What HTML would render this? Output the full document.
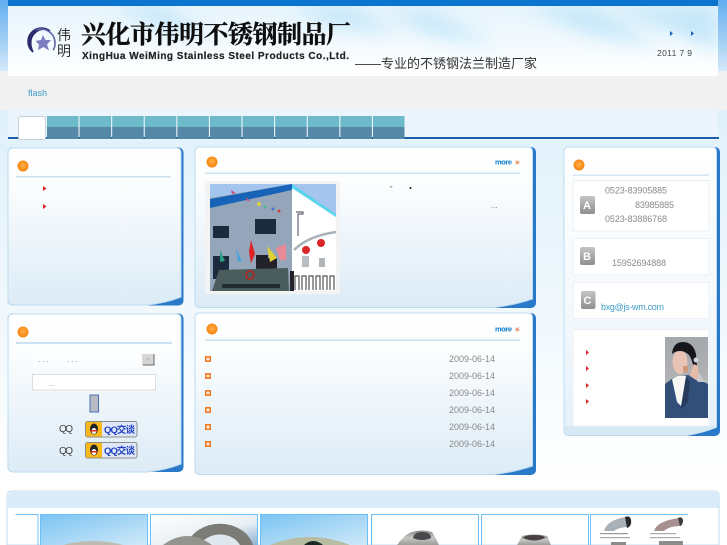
<!DOCTYPE html>
<html lang="zh"><head><meta charset="utf-8"><title>兴化市伟明不锈钢制品厂</title>
<style>
html,body{margin:0;padding:0;width:727px;height:545px;overflow:hidden;background:#fff}
svg{display:block}
text{font-family:"Liberation Sans","Noto Sans CJK SC",sans-serif}
.d{font-size:9px;fill:#8a8a8a}
</style></head><body>
<svg width="727" height="545" viewBox="0 0 727 545" xmlns="http://www.w3.org/2000/svg">
<defs>
<linearGradient id="bg" x1="0" y1="0" x2="0" y2="1"><stop offset="0" stop-color="#dff0fa"/><stop offset=".45" stop-color="#eef7fc"/><stop offset="1" stop-color="#fff"/></linearGradient>
<linearGradient id="side" x1="0" y1="0" x2="0" y2="1"><stop offset="0" stop-color="#62aeef"/><stop offset="1" stop-color="#d5e9f9"/></linearGradient>
<linearGradient id="hd" x1="0" y1="0" x2="0" y2="1"><stop offset="0" stop-color="#e6f4fc"/><stop offset=".6" stop-color="#f5fbfe"/><stop offset="1" stop-color="#fff"/></linearGradient>
<linearGradient id="pn" x1="0" y1="0" x2="0" y2="1"><stop offset="0" stop-color="#fff"/><stop offset=".25" stop-color="#fbfdfe"/><stop offset="1" stop-color="#dcebf6"/></linearGradient>
<linearGradient id="rp" x1="0" y1="0" x2="0" y2="1"><stop offset="0" stop-color="#fff"/><stop offset=".5" stop-color="#f6fafd"/><stop offset="1" stop-color="#e4f0f9"/></linearGradient>
<linearGradient id="gb" x1="0" y1="0" x2="0" y2="1"><stop offset="0" stop-color="#c4c4c4"/><stop offset="1" stop-color="#8f8f8f"/></linearGradient>
<radialGradient id="or" cx=".5" cy=".45" r=".6"><stop offset="0" stop-color="#ffb04a"/><stop offset="1" stop-color="#f57d05"/></radialGradient>
<linearGradient id="b1" x1="0" y1="0" x2="1" y2="1"><stop offset="0" stop-color="#7cc4f3"/><stop offset="1" stop-color="#cfe9f8"/></linearGradient>
<linearGradient id="b2" x1="0" y1="0" x2="1" y2="1"><stop offset="0" stop-color="#fff"/><stop offset=".6" stop-color="#e8eff4"/><stop offset="1" stop-color="#8fb3d3"/></linearGradient>
<linearGradient id="st" x1="0" y1="0" x2="0" y2="1"><stop offset="0" stop-color="#8a8a88"/><stop offset=".5" stop-color="#c6c6c4"/><stop offset="1" stop-color="#9c9c98"/></linearGradient>
<linearGradient id="pbg" x1="0" y1="0" x2="0" y2="1"><stop offset="0" stop-color="#a4a7ac"/><stop offset="1" stop-color="#bcbcbc"/></linearGradient>
<filter id="bl" x="-30%" y="-60%" width="160%" height="220%"><feGaussianBlur stdDeviation="9"/></filter>
<filter id="s" filterUnits="userSpaceOnUse" x="0" y="0" width="727" height="545"><feGaussianBlur stdDeviation=".35"/></filter>
<clipPath id="hc"><rect x="8" y="6" width="710" height="70"/></clipPath>
<clipPath id="ph"><rect x="665" y="337" width="43" height="81"/></clipPath>
</defs>

<rect width="727" height="545" fill="#fff"/>
<rect y="110" width="727" height="380" fill="url(#bg)"/>
<rect width="8" height="72" fill="url(#side)"/>
<rect x="718" width="9" height="72" fill="url(#side)"/>
<rect y="71" width="727" height="39" fill="#f1f1f1"/>

<!-- header -->
<rect x="8" y="6" width="710" height="70" fill="url(#hd)"/>
<g clip-path="url(#hc)"><g filter="url(#bl)" fill="#c4e7f9">
<polygon points="112,6 160,6 215,40 165,30"/>
<polygon points="290,6 350,6 400,34 330,26"/>
<polygon points="385,12 430,12 500,46 430,34"/>
<polygon points="525,6 590,6 660,46 590,34"/>
<polygon points="610,6 718,6 718,50 680,34"/>
</g></g>
<rect x="8" y="0" width="710" height="6" fill="#0a74cf"/>
<rect x="8" y="76" width="710" height="34" fill="#f1f1f1"/>

<g filter="url(#s)">
<!-- logo -->
<path d="M50 31a13.500 13.500 0 0 0-17 21q-3-6-2-12t8-10q6-2 11 1z" fill="#2c2a6c" stroke="#2c2a6c" stroke-width="1.500"/>
<path d="M36 30a14 14 0 0 1 19 13q0 5-2 7" fill="none" stroke="#5b62a4" stroke-width="1.600"/>
<polygon points="43,35 45.500,40 51,40 47,44.500 49,50.500 43.500,47 38,50 39,44.500 35.500,41 41,40" fill="#7c7cc0"/>
<text x="57" y="40" font-size="14" fill="#333">伟</text>
<text x="57" y="56" font-size="14" fill="#333">明</text>
<text x="81" y="43" font-size="25" font-weight="700" fill="#111" stroke="#111" stroke-width=".35" textLength="270" style="font-family:'Noto Serif CJK SC','Liberation Serif',serif">兴化市伟明不锈钢制品厂</text>
<text x="82" y="59" font-size="10" font-weight="700" fill="#222" stroke="#222" stroke-width=".2" textLength="267" lengthAdjust="spacing">XingHua WeiMing Stainless Steel Products Co.,Ltd.</text>
<text x="355" y="68" font-size="13" fill="#333" textLength="182">——专业的不锈钢法兰制造厂家</text>
<polygon points="670,31 673,33.500 670,36" fill="#1a62c0"/>
<polygon points="691,31 694,33.500 691,36" fill="#1a62c0"/>
<text x="657" y="56" font-size="8.500" fill="#444" textLength="35">2011 7 9</text>
<text x="28" y="96" font-size="9" fill="#3f9bc8">flash</text>

<!-- nav -->
<rect x="8" y="110" width="710" height="30" fill="#ecf5fb"/>
<rect x="8" y="137" width="711" height="2" fill="#1c5fa8"/>
<rect x="47" y="116" width="31.500" height="11" fill="#6dbbca"/><rect x="47" y="127" width="31.500" height="12" fill="#5488a6"/>
<rect x="79.600" y="116" width="31.500" height="11" fill="#6dbbca"/><rect x="79.600" y="127" width="31.500" height="12" fill="#5488a6"/>
<rect x="112.200" y="116" width="31.500" height="11" fill="#6dbbca"/><rect x="112.200" y="127" width="31.500" height="12" fill="#5488a6"/>
<rect x="144.800" y="116" width="31.500" height="11" fill="#6dbbca"/><rect x="144.800" y="127" width="31.500" height="12" fill="#5488a6"/>
<rect x="177.400" y="116" width="31.500" height="11" fill="#6dbbca"/><rect x="177.400" y="127" width="31.500" height="12" fill="#5488a6"/>
<rect x="210" y="116" width="31.500" height="11" fill="#6dbbca"/><rect x="210" y="127" width="31.500" height="12" fill="#5488a6"/>
<rect x="242.600" y="116" width="31.500" height="11" fill="#6dbbca"/><rect x="242.600" y="127" width="31.500" height="12" fill="#5488a6"/>
<rect x="275.200" y="116" width="31.500" height="11" fill="#6dbbca"/><rect x="275.200" y="127" width="31.500" height="12" fill="#5488a6"/>
<rect x="307.800" y="116" width="31.500" height="11" fill="#6dbbca"/><rect x="307.800" y="127" width="31.500" height="12" fill="#5488a6"/>
<rect x="340.400" y="116" width="31.500" height="11" fill="#6dbbca"/><rect x="340.400" y="127" width="31.500" height="12" fill="#5488a6"/>
<rect x="373" y="116" width="31.500" height="11" fill="#6dbbca"/><rect x="373" y="127" width="31.500" height="12" fill="#5488a6"/>
<rect x="18.500" y="116.500" width="27" height="23" rx="2" fill="#fff" stroke="#c5d3de"/>

<!-- left panel 1 -->
<rect x="7.500" y="147.500" width="176" height="158" rx="5" fill="#2a78c8"/>
<path d="M13 148H176q5 0 5 5V297q-15 6-34 8H13q-5 0-5-5V153q0-5 5-5z" fill="url(#pn)" stroke="#bcdcf2"/>
<rect x="16" y="176" width="155" height="1.500" fill="#cce2f3"/>
<circle cx="23" cy="166" r="5.500" fill="url(#or)"/>
<polygon points="43,186 46.500,188.500 43,191" fill="#e8202a"/>
<polygon points="43,204 46.500,206.500 43,209" fill="#e8202a"/>

<!-- left panel 2 -->
<rect x="7.500" y="313.500" width="176" height="158.500" rx="5" fill="#2a78c8"/>
<path d="M13 314H176q5 0 5 5V464q-15 6-34 8H13q-5 0-5-5V319q0-5 5-5z" fill="url(#pn)" stroke="#bcdcf2"/>
<rect x="16" y="342" width="156" height="2" fill="#cce2f3"/>
<circle cx="23" cy="332" r="5.500" fill="url(#or)"/>
<rect x="33" y="352" width="122" height="15" fill="#fbfdfe"/>
<text x="38" y="362" font-size="9" fill="#999" letter-spacing="1.500">...</text>
<text x="67" y="362" font-size="9" fill="#999" letter-spacing="1.500">...</text>
<rect x="142" y="354" width="12" height="11" fill="#d6d6d6" stroke="#eee" stroke-width=".5"/>
<path d="M143 365H154V354" fill="none" stroke="#666"/>
<polygon points="146,358 150,358 148,361" fill="#bbb"/>
<rect x="32.500" y="374.500" width="123" height="15.500" fill="#fff" stroke="#ddd"/>
<text x="48" y="386" font-size="8" fill="#aaa">...</text>
<rect x="90" y="395" width="8.500" height="17" fill="#b9bbc4" stroke="#4a6fb5"/>
<text x="59" y="432" font-size="10" fill="#444" textLength="14">QQ</text>
<text x="59" y="454" font-size="10" fill="#444" textLength="14">QQ</text>
<rect x="85.500" y="421.500" width="51.500" height="15.500" rx="2" fill="#dfe7f8" stroke="#8b8f86"/>
<rect x="86" y="422" width="16" height="14.500" fill="#f9b91f"/>
<ellipse cx="94" cy="429" rx="4" ry="5.500" fill="#222"/><ellipse cx="94" cy="431" rx="2.500" ry="3" fill="#fff"/><rect x="90.500" y="430" width="7" height="1.500" fill="#d92b20"/>
<text x="104" y="433" font-size="9.500" font-weight="700" fill="#1e3fc0" textLength="31">QQ交谈</text>
<rect x="85.500" y="442.500" width="51.500" height="15.500" rx="2" fill="#dfe7f8" stroke="#8b8f86"/>
<rect x="86" y="443" width="16" height="14.500" fill="#f9b91f"/>
<ellipse cx="94" cy="450" rx="4" ry="5.500" fill="#222"/><ellipse cx="94" cy="452" rx="2.500" ry="3" fill="#fff"/><rect x="90.500" y="451" width="7" height="1.500" fill="#d92b20"/>
<text x="104" y="454" font-size="9.500" font-weight="700" fill="#1e3fc0" textLength="31">QQ交谈</text>

<!-- middle panel 1 -->
<rect x="195" y="147" width="341" height="161" rx="5" fill="#2a78c8"/>
<path d="M200 147H528q4.500 0 4.500 5V299q-18 6-38 8.500H200q-5 0-5-5V152q0-5 5-5z" fill="url(#pn)" stroke="#bcdcf2"/>
<rect x="205" y="172.500" width="315" height="1.500" fill="#cce2f3"/>
<circle cx="212" cy="162" r="5.500" fill="url(#or)"/>
<text x="495" y="164.500" font-size="7.500" font-weight="700" fill="#0a7ad0" textLength="17">more</text>
<rect x="515" y="160" width="5" height="5" fill="#f4e6dc"/><polygon points="516.500,161 519,162.500 516.500,164" fill="#ee5a20"/>
<text x="390" y="191" font-size="7" fill="#555">"</text>
<circle cx="410.500" cy="188" r="1" fill="#111"/>
<text x="491" y="208" font-size="8" fill="#777">...</text>

<!-- building photo -->
<rect x="205" y="181" width="135" height="113" fill="#f3f3f3"/>
<rect x="210" y="184" width="126" height="107" fill="#95a6ba"/>
<polygon points="210,184 292,184 210,198" fill="#a4c6ee"/>
<polygon points="292,184 336,184 336,214" fill="#a4c6ee"/>
<polygon points="292,188 336,217 336,291 292,291" fill="#fff"/>
<polygon points="292,184 336,214 336,217 292,188" fill="#59d6f0"/>
<polygon points="210,199 292,184 292,190 210,208" fill="#1864b8"/>
<rect x="213" y="226" width="16" height="12" fill="#1c2a3c"/>
<rect x="255" y="219" width="21" height="15" fill="#1c2a3c"/>
<rect x="213" y="256" width="16" height="23" fill="#1c2a3c"/>
<rect x="256" y="255" width="12" height="15" fill="#20242c"/>
<rect x="268" y="258" width="9" height="12" fill="#20242c"/>
<polygon points="220,250 225,261 220,262" fill="#2a9c84"/>
<polygon points="236,248 242,261 238,262" fill="#4aa6d8"/>
<polygon points="251,240 255,254 251,263 249,252" fill="#e02028"/>
<polygon points="267,246 277,258 270,262" fill="#e0d030"/>
<polygon points="276,248 286,244 286,260 280,260" fill="#e88a98"/>
<polygon points="219,270 288,268 289,291 212,291" fill="#4c5c5c"/>
<circle cx="250" cy="275" r="4" fill="none" stroke="#c02020" stroke-width="1.500"/>
<rect x="222" y="284" width="58" height="4" fill="#222c30"/>
<rect x="290" y="271" width="4" height="20" fill="#20242c"/>
<path d="M295 290v-14h4v14M302 290v-14h4v14M309 290v-14h4v14M316 290v-14h4v14M323 290v-14h4v14M330 290v-14h4v14" fill="none" stroke="#555" stroke-width="1.200"/>
<path d="M294 250q14-14 42-18" fill="none" stroke="#aab2b8" stroke-width="2.500"/>
<circle cx="306" cy="250" r="4" fill="#d82828"/>
<circle cx="321" cy="243" r="4" fill="#d82828"/>
<rect x="302" y="256" width="7" height="11" fill="#b8bec2"/>
<rect x="319" y="258" width="6" height="9" fill="#b0b6ba"/>
<path d="M296 212h7v2h-5v22" fill="none" stroke="#667" stroke-width="1.200"/>
<polygon points="231,190 236,193 232,194" fill="#d0507a"/><polygon points="246,197 250,201 247,201" fill="#d0507a"/>
<circle cx="259" cy="204" r="2" fill="#d8d040"/><circle cx="265" cy="207" r="1.500" fill="#4cb898"/><circle cx="273" cy="209" r="1.500" fill="#5070d0"/><circle cx="279" cy="211" r="1.500" fill="#d04040"/>

<!-- middle panel 2 -->
<rect x="195" y="313" width="341" height="162" rx="5" fill="#2a78c8"/>
<path d="M200 313H528q4.500 0 4.500 5V466q-18 6-38 8.500H200q-5 0-5-5V318q0-5 5-5z" fill="url(#pn)" stroke="#bcdcf2"/>
<rect x="205" y="339.500" width="315" height="1.500" fill="#cce2f3"/>
<circle cx="212" cy="329" r="5.500" fill="url(#or)"/>
<text x="495" y="331.500" font-size="7.500" font-weight="700" fill="#0a7ad0" textLength="17">more</text>
<rect x="515" y="327" width="5" height="5" fill="#f4e6dc"/><polygon points="516.500,328 519,329.500 516.500,331" fill="#ee5a20"/>
<g fill="#f07a28">
<rect x="205" y="356" width="6" height="6"/><rect x="205" y="373" width="6" height="6"/><rect x="205" y="390" width="6" height="6"/><rect x="205" y="407" width="6" height="6"/><rect x="205" y="424" width="6" height="6"/><rect x="205" y="441" width="6" height="6"/>
</g>
<g fill="#fff">
<rect x="206" y="358.500" width="4" height="1"/><rect x="207.500" y="357" width="1" height="4"/>
<rect x="206" y="375.500" width="4" height="1"/><rect x="207.500" y="374" width="1" height="4"/>
<rect x="206" y="392.500" width="4" height="1"/><rect x="207.500" y="391" width="1" height="4"/>
<rect x="206" y="409.500" width="4" height="1"/><rect x="207.500" y="408" width="1" height="4"/>
<rect x="206" y="426.500" width="4" height="1"/><rect x="207.500" y="425" width="1" height="4"/>
<rect x="206" y="443.500" width="4" height="1"/><rect x="207.500" y="442" width="1" height="4"/>
</g>
<text class="d" x="449" y="362" textLength="46">2009-06-14</text>
<text class="d" x="449" y="379" textLength="46">2009-06-14</text>
<text class="d" x="449" y="396" textLength="46">2009-06-14</text>
<text class="d" x="449" y="413" textLength="46">2009-06-14</text>
<text class="d" x="449" y="430" textLength="46">2009-06-14</text>
<text class="d" x="449" y="447" textLength="46">2009-06-14</text>

<!-- right panel -->
<rect x="564" y="147" width="156" height="289" rx="5" fill="#2a78c8"/>
<path d="M569 147H712q4.500 0 4.500 5V427q-14 6-30 8.500H569q-5 0-5-5V152q0-5 5-5z" fill="url(#rp)" stroke="#bcdcf2"/>
<path d="M565 426H716V428q-14 5-30 7H569q-4 0-4-4z" fill="#d8e9f6"/>
<rect x="573" y="174.500" width="136" height="1.500" fill="#d5e6f4"/>
<circle cx="579" cy="165" r="5.500" fill="url(#or)"/>
<rect x="573" y="180.500" width="136" height="50.500" fill="#fff" stroke="#ebf0f6"/>
<rect x="573" y="238.500" width="136" height="36.500" fill="#fff" stroke="#ebf0f6"/>
<rect x="573" y="282.500" width="136" height="36" fill="#fff" stroke="#ebf0f6"/>
<rect x="573" y="329.500" width="136" height="96.500" fill="#fff" stroke="#ebf0f6"/>
<rect x="580" y="196" width="15" height="18" rx="2" fill="url(#gb)"/>
<rect x="580" y="247" width="15" height="18" rx="2" fill="url(#gb)"/>
<rect x="581" y="291" width="14.500" height="18" rx="2" fill="url(#gb)"/>
<text x="583" y="209" font-size="11" font-weight="700" fill="#fff">A</text>
<text x="583" y="260" font-size="11" font-weight="700" fill="#fff">B</text>
<text x="583.500" y="304" font-size="11" font-weight="700" fill="#fff">C</text>
<text class="d" x="605" y="193.500" textLength="62">0523-83905885</text>
<text class="d" x="635" y="208" textLength="39">83985885</text>
<text class="d" x="605" y="222" textLength="62">0523-83886768</text>
<text class="d" x="612" y="266" textLength="54">15952694888</text>
<text x="601" y="310" font-size="9" fill="#3f9bc8" textLength="63">bxg@js-wm.com</text>
<polygon points="586,350 589,352.500 586,355" fill="#e8202a"/>
<polygon points="586,366 589,368.500 586,371" fill="#e8202a"/>
<polygon points="586,383 589,385.500 586,388" fill="#e8202a"/>
<polygon points="586,399 589,401.500 586,404" fill="#e8202a"/>

<!-- phone operator -->
<g clip-path="url(#ph)">
<rect x="665" y="337" width="43" height="81" fill="url(#pbg)"/>
<path d="M665 418V384l8-6 15-3 8 3 12 6v34z" fill="#33507a"/>
<path d="M672 379l6-3 8 0-5 30-4-4z" fill="#f6f6f4"/>
<path d="M681 410l5-33 4 5-2 20z" fill="#263a5c"/>
<path d="M696 368l7 11 5 3-10 0-4-5z" fill="#c8cacc"/>
<ellipse cx="680" cy="362" rx="7.500" ry="12" fill="#e9c4b4"/>
<path d="M672 354q1-12 11-12 10 0 13 12l1 13-3 2q-2-10-5-14-4-4-9-4-5 0-8 3z" fill="#17171d"/>
<circle cx="696" cy="360" r="2.500" fill="#d0d3d7"/>
<path d="M690 376q1-7 4-12l4 2 1 8-3 6z" fill="#e4bba8"/>
<rect x="683" y="366" width="5" height="6" fill="#cf9a7c"/>
</g>

<!-- bottom block -->
<path d="M12 491H714q5 0 5 5V545H7V496q0-5 5-5z" fill="#fff" stroke="#c3def2"/>
<path d="M12 492H714q4.500 0 4.500 4V508H8V496q0-4 4-4z" fill="#daecf9"/>
<g fill="none" stroke="#6cc0f8" stroke-width="1">
<path d="M15.500 514.500H38V545"/>
<path d="M40.500 545V514.500H147.500V545"/>
<path d="M150.500 545V514.500H257.500V545"/>
<path d="M260.500 545V514.500H367.500V545"/>
<path d="M371.500 545V514.500H478.500V545"/>
<path d="M481.500 545V514.500H588.500V545"/>
<path d="M590.500 545V514.500H688"/>
</g>
<rect x="41" y="515" width="106" height="30" fill="url(#b1)"/>
<path d="M63 545Q93 537 123 545z" fill="#bdbcb2"/>
<rect x="151" y="515" width="106" height="30" fill="url(#b2)"/>
<path d="M187 545A34 28 0 0 1 253 545z" fill="#7c7c76"/>
<path d="M200 545A22 18 0 0 1 240 545z" fill="#dfe8ee"/>
<path d="M163 545Q187 527 212 545z" fill="#94948e"/>
<rect x="261" y="515" width="106" height="30" fill="url(#b1)"/>
<path d="M270 545Q310 529 350 545z" fill="#b7bca2"/>
<path d="M304 545Q313 537 323 545z" fill="#1d2a26"/>
<path d="M397 545Q405 534 412 532Q422 529 432 532Q436 538 439 545z" fill="url(#st)"/>
<path d="M413 538Q414 532 422 532Q431 532 431 538Q422 542 413 538z" fill="#4a4a4c"/>
<path d="M517 545Q520 540 522 536Q534 533 547 536Q549 540 551 545z" fill="url(#st)"/>
<path d="M523 538Q525 535 534 535Q544 535 545 538Q534 543 523 538z" fill="#4a4244"/>
<path d="M604 531q3-11 22-14l3 10q-10 0-15 4z" fill="#a8b0b8"/>
<path d="M625 517q5-2 6 3 1 6-4 8z" fill="#2a2a2a"/>
<path d="M654 531q3-10 25-13l2 8q-12 0-17 5z" fill="#a89090"/>
<path d="M678 518q4-2 5 2 0 5-3 6z" fill="#3a3a3a"/>
<rect x="600" y="533" width="28" height="1.200" fill="#999"/><rect x="600" y="537" width="30" height="1.200" fill="#aaa"/>
<rect x="650" y="533" width="26" height="1.200" fill="#aaa"/><rect x="650" y="537" width="30" height="1.200" fill="#aaa"/>
<rect x="611" y="542" width="15" height="3" fill="#8c8c88"/><rect x="659" y="541" width="24" height="4" fill="#8c8c88"/>
</g>
</svg>
</body></html>
